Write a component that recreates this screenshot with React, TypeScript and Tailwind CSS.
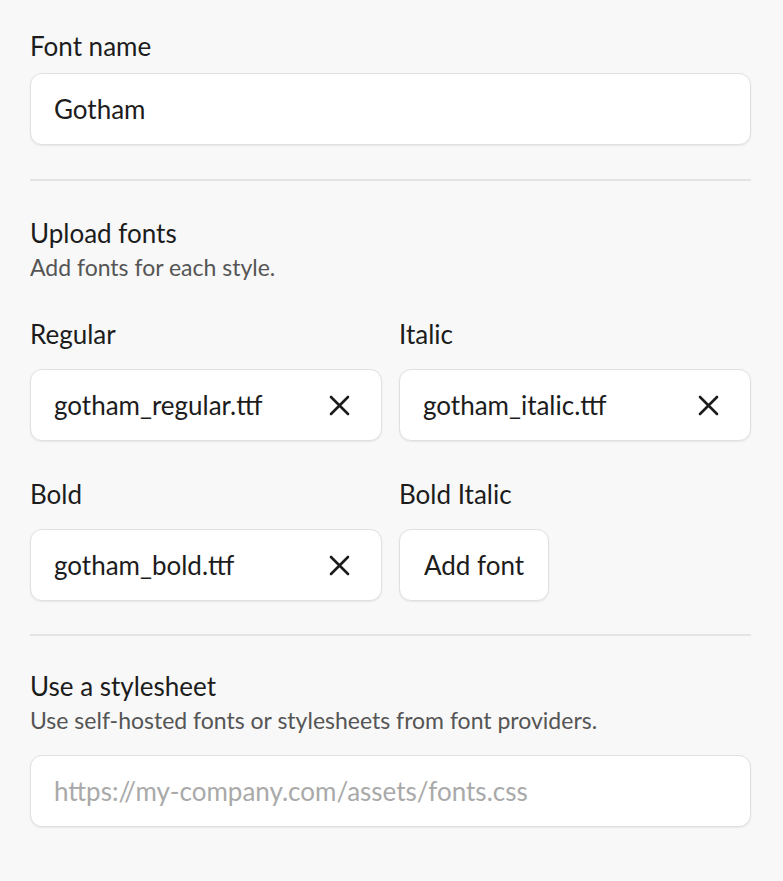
import { useState } from 'react'

interface FontSlot {
  label: string
  file: string | null
}

function RemoveIcon() {
  return (
    <svg width="21" height="21" viewBox="0 0 21 21" fill="none" aria-hidden="true">
      <path d="M2 2L19 19M19 2L2 19" stroke="#1c1c1c" strokeWidth="2.6" strokeLinecap="round" />
    </svg>
  )
}

function Divider({ className }: { className: string }) {
  return <div className={`h-[2px] w-full bg-[#e4e4e4] ${className}`} />
}

const boxClass =
  'h-[72px] rounded-[12px] border border-[#e0e0e0] bg-white shadow-[0_1px_2px_rgba(0,0,0,0.07)]'

export default function App() {
  const [fontName, setFontName] = useState('Gotham')
  const [url, setUrl] = useState('')
  const [slots, setSlots] = useState<FontSlot[]>([
    { label: 'Regular', file: 'gotham_regular.ttf' },
    { label: 'Italic', file: 'gotham_italic.ttf' },
    { label: 'Bold', file: 'gotham_bold.ttf' },
    { label: 'Bold Italic', file: null },
  ])

  const removeFile = (index: number) => {
    setSlots(prev => prev.map((s, i) => (i === index ? { ...s, file: null } : s)))
  }

  return (
    <div
      className="min-h-[881px] w-full bg-[#f8f8f8] pl-[30px] pr-[32px] pt-[30px] text-[#1c1c1c]"
      style={{ fontFamily: 'Lato, "Noto Sans", sans-serif' }}
    >
      <label className="block text-[26px] leading-[32px]">Font name</label>
      <input
        value={fontName}
        onChange={e => setFontName(e.target.value)}
        className={`${boxClass} mt-[11px] block w-full pl-[23px] text-[26px] outline-none`}
      />

      <Divider className="mt-[34px]" />

      <h2 className="mt-[36px] text-[26px] leading-[32px]">Upload fonts</h2>
      <p className="mt-[4px] text-[23px] leading-[28px] text-[#555555]">Add fonts for each style.</p>

      <div className="mt-[37px] grid grid-cols-2 gap-x-[17px] gap-y-[37px]">
        {slots.map((slot, i) => (
          <div key={slot.label} className="flex flex-col">
            <span className="text-[26px] leading-[32px]">{slot.label}</span>
            {slot.file ? (
              <div className={`${boxClass} mt-[19px] flex items-center justify-between pl-[23px] pr-[31px]`}>
                <span className="text-[26px]">{slot.file}</span>
                <button onClick={() => removeFile(i)} className="flex items-center">
                  <RemoveIcon />
                </button>
              </div>
            ) : (
              <button className={`${boxClass} mt-[19px] w-[150px] text-[26px]`}>Add font</button>
            )}
          </div>
        ))}
      </div>

      <Divider className="mt-[33px]" />

      <h2 className="mt-[34px] text-[26px] leading-[32px]">Use a stylesheet</h2>
      <p className="mt-[4px] text-[23px] leading-[28px] text-[#555555]">
        Use self-hosted fonts or stylesheets from font providers.
      </p>
      <input
        value={url}
        onChange={e => setUrl(e.target.value)}
        placeholder="https://my-company.com/assets/fonts.css"
        className={`${boxClass} mt-[21px] block w-full pl-[23px] text-[26px] outline-none placeholder:text-[#a9a9a9]`}
      />
    </div>
  )
}
